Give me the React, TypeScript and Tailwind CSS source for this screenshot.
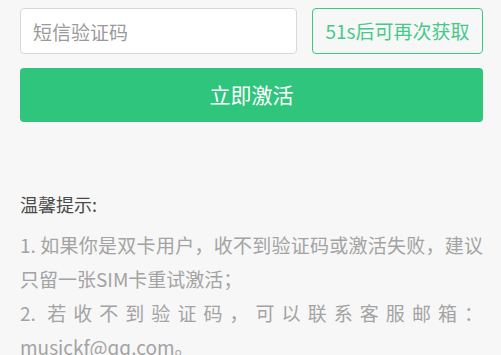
export default function App() {
  return (
    <div
      className="min-h-screen w-[501px] h-[355px] overflow-hidden bg-[#f7f7f7] pl-5 pr-[18px] pt-2"
      style={{ fontFamily: '"Noto Sans CJK SC", "Noto Sans", sans-serif' }}
    >
      {/* code row */}
      <div className="flex gap-[15px]">
        <input
          className="h-[46px] flex-1 min-w-0 rounded-[4px] border border-[#d5d8dc] bg-white px-3 text-[19px] text-[#333] placeholder:text-[#9a9a9a] outline-none"
          placeholder="短信验证码"
        />
        <button className="h-[46px] w-[171px] rounded-[4px] border border-[#3cc882] text-[19px] text-[#46c98a]">
          51s后可再次获取
        </button>
      </div>

      <button className="mt-[14px] h-[54px] w-full rounded-[4px] bg-[#2fc57c] text-[21px] text-white">
        立即激活
      </button>

      {/* tips */}
      <div className="mt-[68px]">
        <h3 className="text-[18px] leading-[28px] text-[#4a4a4a]">温馨提示:</h3>
        <div className="mt-[10px] text-[19px] leading-[34px] text-[#a3a3a3] text-justify">
          <p>1. 如果你是双卡用户，收不到验证码或激活失败，建议只留一张SIM卡重试激活；</p>
          <p>2. 若收不到验证码，可以联系客服邮箱：musickf@qq.com。</p>
        </div>
      </div>
    </div>
  );
}
